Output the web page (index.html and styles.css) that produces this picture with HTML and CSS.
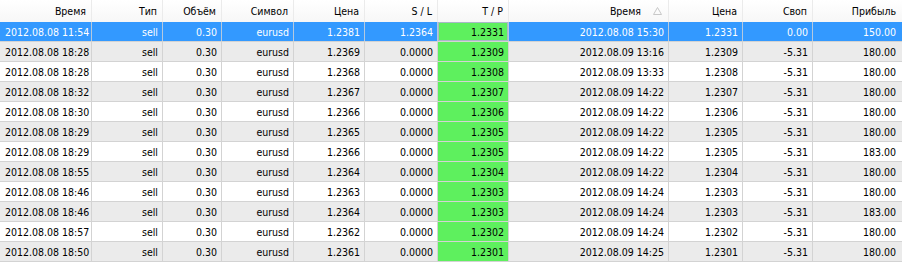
FILE: index.html
```html
<!DOCTYPE html>
<html>
<head>
<meta charset="utf-8">
<link rel="stylesheet" href="styles.css">
</head>
<body>
<div class="grid">
  <div class="row head">
    <div class="c">Время</div><div class="c">Тип</div><div class="c">Объём</div><div class="c">Символ</div><div class="c">Цена</div><div class="c">S / L</div><div class="c">T / P</div><div class="c sort">Время <svg class="tri" width="9" height="8" viewBox="0 0 9 8"><path d="M4.5 0.5 L8.5 7.5 L0.5 7.5 Z" fill="none" stroke="#c8c8c8" stroke-width="1"/></svg></div><div class="c">Цена</div><div class="c">Своп</div><div class="c">Прибыль</div>
  </div>
  <div class="row sel">
    <div class="c l">2012.08.08 11:54</div><div class="c">sell</div><div class="c">0.30</div><div class="c">eurusd</div><div class="c">1.2381</div><div class="c">1.2364</div><div class="c tp">1.2331</div><div class="c">2012.08.08 15:30</div><div class="c">1.2331</div><div class="c">0.00</div><div class="c">150.00</div>
  </div>
  <div class="row alt">
    <div class="c l">2012.08.08 18:28</div><div class="c">sell</div><div class="c">0.30</div><div class="c">eurusd</div><div class="c">1.2369</div><div class="c">0.0000</div><div class="c tp">1.2309</div><div class="c">2012.08.09 13:16</div><div class="c">1.2309</div><div class="c">-5.31</div><div class="c">180.00</div>
  </div>
  <div class="row">
    <div class="c l">2012.08.08 18:28</div><div class="c">sell</div><div class="c">0.30</div><div class="c">eurusd</div><div class="c">1.2368</div><div class="c">0.0000</div><div class="c tp">1.2308</div><div class="c">2012.08.09 13:33</div><div class="c">1.2308</div><div class="c">-5.31</div><div class="c">180.00</div>
  </div>
  <div class="row alt">
    <div class="c l">2012.08.08 18:32</div><div class="c">sell</div><div class="c">0.30</div><div class="c">eurusd</div><div class="c">1.2367</div><div class="c">0.0000</div><div class="c tp">1.2307</div><div class="c">2012.08.09 14:22</div><div class="c">1.2307</div><div class="c">-5.31</div><div class="c">180.00</div>
  </div>
  <div class="row">
    <div class="c l">2012.08.08 18:30</div><div class="c">sell</div><div class="c">0.30</div><div class="c">eurusd</div><div class="c">1.2366</div><div class="c">0.0000</div><div class="c tp">1.2306</div><div class="c">2012.08.09 14:22</div><div class="c">1.2306</div><div class="c">-5.31</div><div class="c">180.00</div>
  </div>
  <div class="row alt">
    <div class="c l">2012.08.08 18:29</div><div class="c">sell</div><div class="c">0.30</div><div class="c">eurusd</div><div class="c">1.2365</div><div class="c">0.0000</div><div class="c tp">1.2305</div><div class="c">2012.08.09 14:22</div><div class="c">1.2305</div><div class="c">-5.31</div><div class="c">180.00</div>
  </div>
  <div class="row">
    <div class="c l">2012.08.08 18:29</div><div class="c">sell</div><div class="c">0.30</div><div class="c">eurusd</div><div class="c">1.2366</div><div class="c">0.0000</div><div class="c tp">1.2305</div><div class="c">2012.08.09 14:22</div><div class="c">1.2305</div><div class="c">-5.31</div><div class="c">183.00</div>
  </div>
  <div class="row alt">
    <div class="c l">2012.08.08 18:55</div><div class="c">sell</div><div class="c">0.30</div><div class="c">eurusd</div><div class="c">1.2364</div><div class="c">0.0000</div><div class="c tp">1.2304</div><div class="c">2012.08.09 14:22</div><div class="c">1.2304</div><div class="c">-5.31</div><div class="c">180.00</div>
  </div>
  <div class="row">
    <div class="c l">2012.08.08 18:46</div><div class="c">sell</div><div class="c">0.30</div><div class="c">eurusd</div><div class="c">1.2363</div><div class="c">0.0000</div><div class="c tp">1.2303</div><div class="c">2012.08.09 14:24</div><div class="c">1.2303</div><div class="c">-5.31</div><div class="c">180.00</div>
  </div>
  <div class="row alt">
    <div class="c l">2012.08.08 18:46</div><div class="c">sell</div><div class="c">0.30</div><div class="c">eurusd</div><div class="c">1.2364</div><div class="c">0.0000</div><div class="c tp">1.2303</div><div class="c">2012.08.09 14:24</div><div class="c">1.2303</div><div class="c">-5.31</div><div class="c">183.00</div>
  </div>
  <div class="row">
    <div class="c l">2012.08.08 18:57</div><div class="c">sell</div><div class="c">0.30</div><div class="c">eurusd</div><div class="c">1.2362</div><div class="c">0.0000</div><div class="c tp">1.2302</div><div class="c">2012.08.09 14:24</div><div class="c">1.2302</div><div class="c">-5.31</div><div class="c">180.00</div>
  </div>
  <div class="row alt">
    <div class="c l">2012.08.08 18:50</div><div class="c">sell</div><div class="c">0.30</div><div class="c">eurusd</div><div class="c">1.2361</div><div class="c">0.0000</div><div class="c tp">1.2301</div><div class="c">2012.08.09 14:25</div><div class="c">1.2301</div><div class="c">-5.31</div><div class="c">180.00</div>
  </div>
</div>
</body>
</html>
```
FILE: styles.css
```css
html, body {
  margin: 0;
  padding: 0;
  background: #ffffff;
}
.grid {
  width: 902px;
  font-family: "DejaVu Sans Condensed", "DejaVu Sans", sans-serif;
  font-size: 10.5px;
  color: #000;
}
.row {
  display: grid;
  grid-template-columns: 92px 71px 59px 72px 71px 73px 71px 160px 74px 70px 1fr;
  height: 20px;
  box-sizing: border-box;
  border-bottom: 1px solid #d3d3d3;
  background: #ffffff;
}
.row.alt {
  background: #ebebeb;
}
.row.sel {
  background: #3399ff;
  color: #ffffff;
}
.c {
  box-sizing: border-box;
  border-right: 1px solid #d3d3d3;
  display: flex;
  align-items: center;
  justify-content: flex-end;
  padding-right: 4px;
  white-space: nowrap;
  overflow: hidden;
}
.c:last-child {
  border-right: none;
  padding-right: 6px;
}
.c.l {
  justify-content: flex-start;
  padding-left: 5px;
  padding-right: 0;
}
.head {
  height: 22px;
  border-bottom: none;
  background: linear-gradient(#ffffff, #f7f7f7);
}
.head .c {
  border-right: 1px solid #ebebeb;
  padding-right: 5px;
}
.head .c:last-child {
  border-right: none;
  padding-right: 6px;
}
.head .sort {
  padding-right: 6px;
}
.tri {
  margin-left: 12px;
}
.tp {
  background: #5ef05e;
  color: #000;
}
.sel .tp {
  box-shadow: inset 0 0 0 1px #a9b8c8;
}
.sel .c {
  border-right-color: #b5c9de;
}
```
